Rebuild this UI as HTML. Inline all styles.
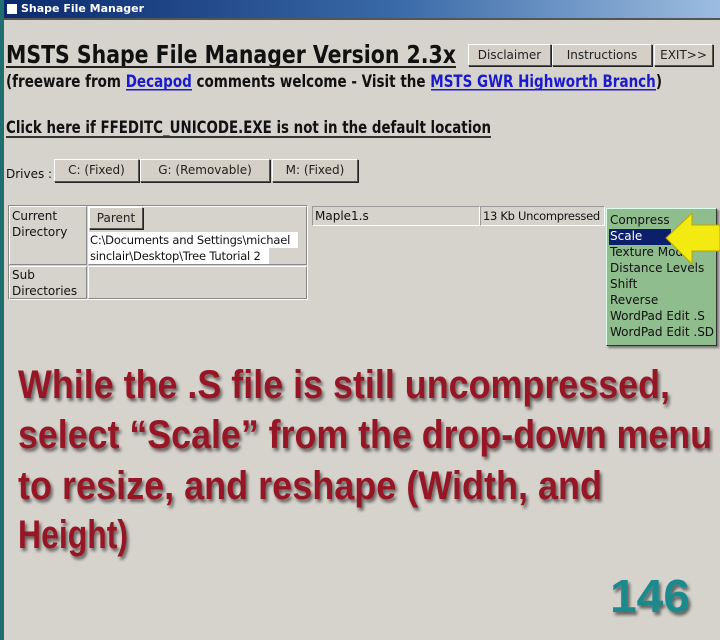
<!DOCTYPE html>
<html><head><meta charset="utf-8"><style>
*{margin:0;padding:0;box-sizing:border-box}
body{width:720px;height:640px;overflow:hidden;background:#d6d3cc;position:relative;font-family:"DejaVu Sans","Liberation Sans",sans-serif;color:#111}
.a{position:absolute;white-space:nowrap}
.btn{position:absolute;background:#d4d0c8;border:1px solid;border-color:#fff #555 #555 #fff;box-shadow:1px 1px 0 #222;font-size:12px;text-align:center;color:#222}
svg text{font-family:"DejaVu Sans","Liberation Sans",sans-serif}
.big{font-family:"Liberation Sans",sans-serif;font-weight:bold;fill:#961526;font-size:40px}
</style></head><body>
<div class="a" style="left:0;top:0;width:4px;height:640px;background:#1f6f70"></div>
<div class="a" style="left:4px;top:0;width:716px;height:18px;background:linear-gradient(90deg,#0b2a6e,#3a6aa8 55%,#9dbde0)"></div>
<div class="a" style="left:7px;top:4px;width:10px;height:10px;background:#fff"></div>
<div class="a" style="left:21px;top:2px;color:#fff;font-weight:bold;font-size:11px">Shape File Manager</div>
<div class="a" style="left:4px;top:18px;width:716px;height:2px;background:#555"></div>

<svg class="a" style="left:0;top:0" width="720" height="640">
<defs><filter id="sh" x="-5%" y="-20%" width="110%" height="150%"><feGaussianBlur in="SourceAlpha" stdDeviation="1.5"/><feOffset dx="2" dy="3"/><feComponentTransfer><feFuncA type="linear" slope="0.55"/></feComponentTransfer><feMerge><feMergeNode/><feMergeNode in="SourceGraphic"/></feMerge></filter></defs>
<text x="6" y="63" font-size="25" font-weight="bold" textLength="450" lengthAdjust="spacingAndGlyphs" fill="#111">MSTS Shape File Manager Version 2.3x</text>
<rect x="6" y="66" width="450" height="2" fill="#222"/>
<text x="6" y="87" font-size="17" font-weight="bold" textLength="656" lengthAdjust="spacingAndGlyphs" fill="#111">(freeware from <tspan fill="#1a1acc">Decapod</tspan> comments welcome - Visit the <tspan fill="#1a1acc">MSTS GWR Highworth Branch</tspan>)</text>
<rect x="126" y="89" width="66" height="1.5" fill="#1a1acc"/>
<rect x="431" y="89" width="225" height="1.5" fill="#1a1acc"/>
<text x="6" y="133" font-size="17" font-weight="bold" textLength="485" lengthAdjust="spacingAndGlyphs" fill="#111">Click here if FFEDITC_UNICODE.EXE is not in the default location</text>
<rect x="6" y="136" width="485" height="2" fill="#333"/>
<g filter="url(#sh)">
<text class="big" x="18" y="398" textLength="652" lengthAdjust="spacingAndGlyphs">While the  .S file is still uncompressed,</text>
<text class="big" x="18" y="448" textLength="694" lengthAdjust="spacingAndGlyphs">select “Scale” from the drop-down menu</text>
<text class="big" x="18" y="499" textLength="584" lengthAdjust="spacingAndGlyphs">to resize, and reshape (Width, and</text>
<text class="big" x="18" y="548" textLength="110" lengthAdjust="spacingAndGlyphs">Height)</text>
<text class="big" x="610" y="612" style="fill:#1b8a8c;font-size:46px" textLength="80" lengthAdjust="spacingAndGlyphs">146</text>
</g>
</svg>

<div class="btn" style="left:468px;top:44px;width:83px;height:22px;line-height:20px">Disclaimer</div>
<div class="btn" style="left:552px;top:44px;width:100px;height:22px;line-height:20px">Instructions</div>
<div class="btn" style="left:654px;top:44px;width:59px;height:22px;line-height:20px">EXIT&gt;&gt;</div>

<div class="a" style="left:6px;top:167px;font-size:12px">Drives :</div>
<div class="btn" style="left:54px;top:159px;width:85px;height:23px;line-height:21px">C: (Fixed)</div>
<div class="btn" style="left:140px;top:159px;width:130px;height:23px;line-height:21px">G: (Removable)</div>
<div class="btn" style="left:272px;top:159px;width:86px;height:23px;line-height:21px">M: (Fixed)</div>

<div class="a" style="left:8px;top:205px;width:300px;height:95px;border:1px solid #888;border-color:#888 #fff #fff #888"></div>
<div class="a" style="left:9px;top:206px;width:78px;height:59px;border:1px solid;border-color:#fff #888 #888 #fff"></div>
<div class="a" style="left:88px;top:206px;width:219px;height:59px;border:1px solid;border-color:#fff #888 #888 #fff"></div>
<div class="a" style="left:9px;top:266px;width:78px;height:33px;border:1px solid;border-color:#fff #888 #888 #fff"></div>
<div class="a" style="left:88px;top:266px;width:219px;height:33px;border:1px solid;border-color:#fff #888 #888 #fff"></div>
<div class="a" style="left:12px;top:208px;font-size:12px;line-height:16px;white-space:normal;width:72px">Current Directory</div>
<div class="a" style="left:12px;top:267px;font-size:12px;line-height:16px;white-space:normal;width:72px">Sub Directories</div>
<div class="btn" style="left:89px;top:207px;width:54px;height:22px;line-height:20px">Parent</div>
<div class="a" style="left:89px;top:232px;font-size:11.5px;letter-spacing:-0.2px;line-height:16px;background:#fff;width:209px;height:16px;padding-left:1px">C:\Documents and Settings\michael</div>
<div class="a" style="left:89px;top:248px;font-size:11.5px;letter-spacing:-0.2px;line-height:16px;background:#fff;width:180px;height:16px;padding-left:1px">sinclair\Desktop\Tree Tutorial 2</div>

<div class="a" style="left:312px;top:206px;width:168px;height:20px;border:1px solid;border-color:#999 #fff #fff #999;font-size:12px;line-height:18px;padding-left:2px">Maple1.s</div>
<div class="a" style="left:480px;top:206px;width:125px;height:20px;border:1px solid;border-color:#999 #fff #fff #999;font-size:11.5px;letter-spacing:-0.3px;line-height:18px;padding-left:2px;overflow:hidden">13 Kb Uncompressed</div>

<div class="a" style="left:606px;top:208px;width:111px;height:138px;background:#8fbd8d;border:1px solid;border-color:#dfe #333 #333 #dfe;box-shadow:2px 2px 2px #777"></div>
<div class="a" style="left:609px;top:229px;width:62px;height:16px;background:#0c1f6a"></div>
<div class="a" style="left:610px;top:212px;font-size:12px;line-height:16px;color:#111">Compress<br><span style="color:#fff">Scale</span><br>Texture Mods<br>Distance Levels<br>Shift<br>Reverse<br>WordPad Edit .S<br>WordPad Edit .SD</div>
<svg class="a" style="left:660px;top:210px" width="60" height="58"><polygon points="6,28 32,3 32,15 60,15 60,41 32,41 32,54" fill="#f2ea10" stroke="#b8a800" stroke-width="1"/></svg>
</body></html>
